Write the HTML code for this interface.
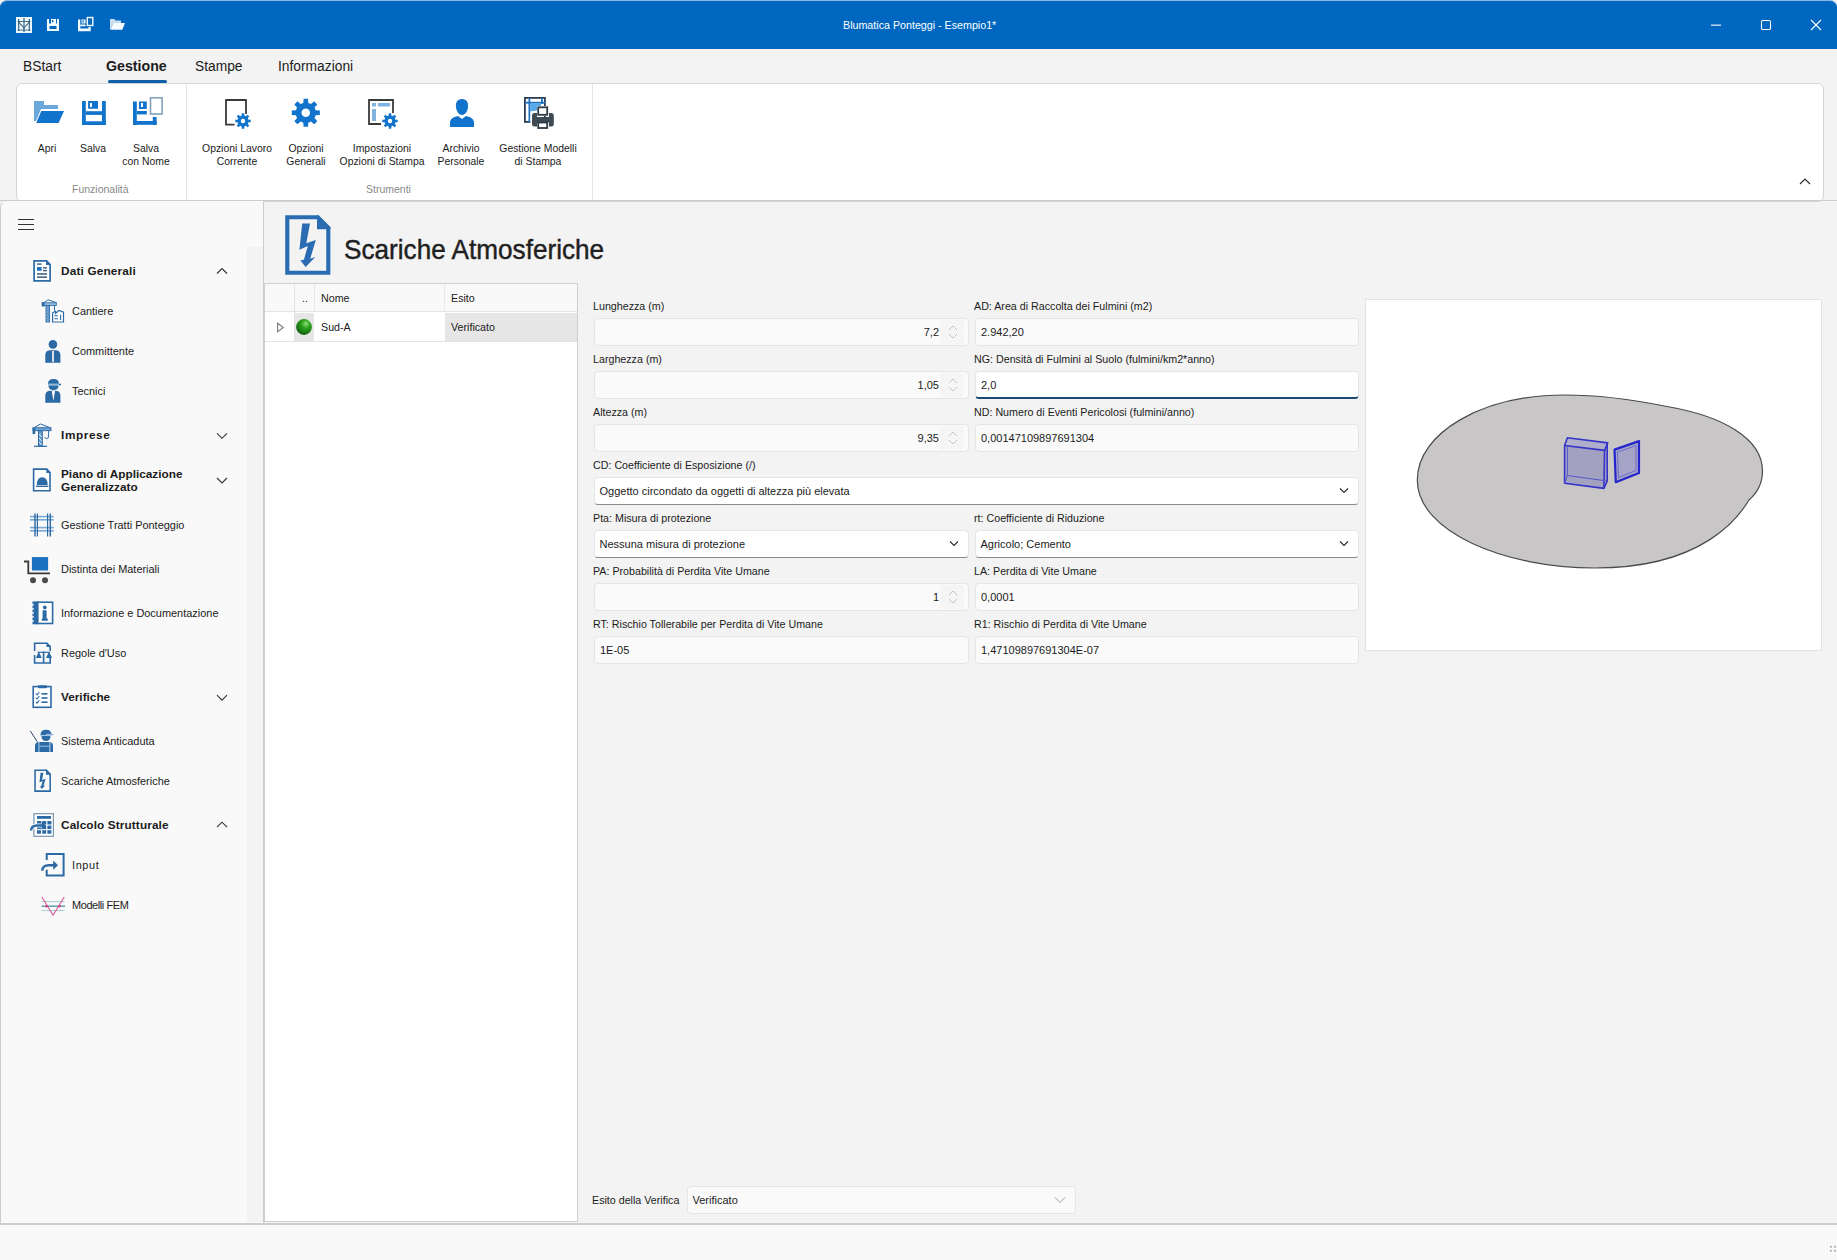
<!DOCTYPE html>
<html><head><meta charset="utf-8"><style>
*{margin:0;padding:0;box-sizing:border-box}
html,body{width:1837px;height:1260px;overflow:hidden;background:#f3f3f3;font-family:"Liberation Sans",sans-serif;color:#1b1b1b}
.a{position:absolute}
.t{position:absolute;white-space:nowrap;line-height:1}
#ov{position:absolute;left:0;top:0;width:1837px;height:1260px;overflow:visible}
#title{left:0;top:0;width:1837px;height:49px;background:#0067c0;border-top:1px solid #8fb6e3;border-top-left-radius:7px;border-top-right-radius:7px}
#ribbon{left:16px;top:83px;width:1808px;height:119px;background:#fff;border:1px solid #d4d4d4;border-radius:6px}
#hline{left:0;top:200px;width:1837px;height:1px;background:#cccccc}
#side{left:0;top:201px;width:264px;height:1023px;background:#f9f9f9;border-left:1px solid #cccccc;border-top-left-radius:6px}
#sidestrip{left:247px;top:247px;width:16px;height:975px;background:#f3f3f3}
#sideline{left:263px;top:201px;width:1px;height:1022px;background:#cccccc}
#status{left:0;top:1223px;width:1837px;height:37px;background:#f9f9f9;border-top:2px solid #cdcdcd}
.tab{font-size:13.8px;color:#1b1b1b;top:60px}
.rl{font-size:10.4px;color:#1b1b1b;text-align:center;line-height:13px;white-space:nowrap;position:absolute;margin-top:0.5px}
.gl{font-size:10.5px;color:#8a8a8a;position:absolute;white-space:nowrap;line-height:1}
.sh{font-size:11.8px;font-weight:bold;color:#1b1b1b}
.si{font-size:10.95px;color:#1b1b1b}
.lbl{font-size:10.7px;color:#1b1b1b}
.inp{position:absolute;height:28px;background:#fafafa;border:1px solid #e5e5e5;border-radius:4px}
.sel{position:absolute;height:28px;background:#fff;border:1px solid #e5e5e5;border-bottom:1px solid #8a8a8a;border-radius:4px}
.val{font-size:11px;color:#1b1b1b}
</style></head><body>
<div id="title" class="a"></div>
<div class="t" style="left:843px;top:20px;font-size:10.7px;color:#fff">Blumatica Ponteggi - Esempio1*</div>

<div class="t tab" style="left:23px">BStart</div>
<div class="t tab" style="left:106px;font-weight:bold;font-size:14.2px;top:58.6px">Gestione</div>
<div class="a" style="left:108px;top:79.6px;width:58.5px;height:3px;background:#0f5fa8;border-radius:2px"></div>
<div class="t tab" style="left:195px">Stampe</div>
<div class="t tab" style="left:278px">Informazioni</div>
<div id="ribbon" class="a"></div>
<div id="hline" class="a"></div>

<div class="a" style="left:186px;top:84px;width:1px;height:116px;background:#e6e6e6"></div>
<div class="a" style="left:592px;top:84px;width:1px;height:116px;background:#e6e6e6"></div>
<div class="rl" style="left:27px;top:141px;width:40px">Apri</div>
<div class="rl" style="left:73px;top:141px;width:40px">Salva</div>
<div class="rl" style="left:116px;top:141px;width:60px">Salva<br>con Nome</div>
<div class="gl" style="left:72px;top:184px">Funzionalità</div>
<div class="rl" style="left:196px;top:141px;width:82px">Opzioni Lavoro<br>Corrente</div>
<div class="rl" style="left:276px;top:141px;width:60px">Opzioni<br>Generali</div>
<div class="rl" style="left:332px;top:141px;width:100px">Impostazioni<br>Opzioni di Stampa</div>
<div class="rl" style="left:426px;top:141px;width:70px">Archivio<br>Personale</div>
<div class="rl" style="left:493px;top:141px;width:90px">Gestione Modelli<br>di Stampa</div>
<div class="gl" style="left:366px;top:184px">Strumenti</div>
<svg class="a" style="left:1798px;top:176px" width="14" height="10"><path d="M2,8 L7,3 L12,8" fill="none" stroke="#2b2b2b" stroke-width="1.1"/></svg>

<div id="side" class="a"></div>
<div id="sidestrip" class="a"></div>
<div id="sideline" class="a"></div>
<div class="t sh" style="left:61px;top:266px;letter-spacing:0.17px">Dati Generali</div>
<div class="t si" style="left:72px;top:306px">Cantiere</div>
<div class="t si" style="left:72px;top:346px">Committente</div>
<div class="t si" style="left:72px;top:386px">Tecnici</div>
<div class="t sh" style="left:61px;top:430px;letter-spacing:0.6px">Imprese</div>
<div class="t sh" style="left:61px;top:469px">Piano di Applicazione</div>
<div class="t sh" style="left:61px;top:481.8px">Generalizzato</div>
<div class="t si" style="left:61px;top:519.6px">Gestione Tratti Ponteggio</div>
<div class="t si" style="left:61px;top:564px">Distinta dei Materiali</div>
<div class="t si" style="left:61px;top:607.6px">Informazione e Documentazione</div>
<div class="t si" style="left:61px;top:648px">Regole d'Uso</div>
<div class="t sh" style="left:61px;top:692px">Verifiche</div>
<div class="t si" style="left:61px;top:736px">Sistema Anticaduta</div>
<div class="t si" style="left:61px;top:776px">Scariche Atmosferiche</div>
<div class="t sh" style="left:61px;top:819.5px;letter-spacing:0.11px">Calcolo Strutturale</div>
<div class="t si" style="left:72px;top:860px;letter-spacing:0.6px">Input</div>
<div class="t si" style="left:72px;top:899.6px;letter-spacing:-0.4px">Modelli FEM</div>

<div class="t" style="left:344px;top:235.6px;font-size:27.6px;color:#1f1f1f;transform:scaleX(0.9475);transform-origin:0 0;-webkit-text-stroke:0.45px #1f1f1f">Scariche Atmosferiche</div>
<div class="a" style="left:264px;top:283px;width:314px;height:939px;background:#fff;border:1px solid #cfcfcf"></div>
<div class="a" style="left:265px;top:284px;width:312px;height:28px;background:#f9f9f9;border-bottom:1px solid #e3e3e3"></div>
<div class="a" style="left:294px;top:284px;width:1px;height:58px;background:#e3e3e3"></div>
<div class="a" style="left:314px;top:284px;width:1px;height:28px;background:#e8e8e8"></div>
<div class="a" style="left:444px;top:284px;width:1px;height:28px;background:#e8e8e8"></div>
<div class="a" style="left:295px;top:313px;width:19px;height:28px;background:#e6e6e6"></div>
<div class="a" style="left:445px;top:313px;width:132px;height:28px;background:#e6e6e6"></div>
<div class="a" style="left:265px;top:341px;width:312px;height:1px;background:#e3e3e3"></div>
<div class="t lbl" style="left:302px;top:293px">..</div>
<div class="t lbl" style="left:321px;top:293px">Nome</div>
<div class="t lbl" style="left:451px;top:293px">Esito</div>
<div class="t lbl" style="left:321px;top:322px">Sud-A</div>
<div class="t lbl" style="left:451px;top:322px">Verificato</div>
<div class="t lbl" style="left:593px;top:301.2px">Lunghezza (m)</div><div class="inp" style="left:594px;top:318px;width:375px"></div><div class="a" style="left:940px;top:320px;width:24px;height:24px;background:#f5f5f5;border-radius:2px"></div><div class="t val" style="left:594px;width:345px;text-align:right;top:326.9px">7,2</div><div class="t lbl" style="left:974px;top:301.2px">AD: Area di Raccolta dei Fulmini (m2)</div><div class="inp" style="left:975px;top:318px;width:384px"></div><div class="t val" style="left:981px;top:326.9px">2.942,20</div><div class="t lbl" style="left:593px;top:354.2px">Larghezza (m)</div><div class="inp" style="left:594px;top:371px;width:375px"></div><div class="a" style="left:940px;top:373px;width:24px;height:24px;background:#f5f5f5;border-radius:2px"></div><div class="t val" style="left:594px;width:345px;text-align:right;top:379.9px">1,05</div><div class="t lbl" style="left:974px;top:354.2px">NG: Densità di Fulmini al Suolo (fulmini/km2*anno)</div><div class="inp" style="left:975px;top:371px;width:384px;background:#fff;border-bottom:2px solid #1d4a70"></div><div class="t val" style="left:981px;top:379.9px">2,0</div><div class="t lbl" style="left:593px;top:407.2px">Altezza (m)</div><div class="inp" style="left:594px;top:424px;width:375px"></div><div class="a" style="left:940px;top:426px;width:24px;height:24px;background:#f5f5f5;border-radius:2px"></div><div class="t val" style="left:594px;width:345px;text-align:right;top:432.9px">9,35</div><div class="t lbl" style="left:974px;top:407.2px">ND: Numero di Eventi Pericolosi (fulmini/anno)</div><div class="inp" style="left:975px;top:424px;width:384px"></div><div class="t val" style="left:981px;top:432.9px">0,00147109897691304</div><div class="t lbl" style="left:593px;top:460.2px">CD: Coefficiente di Esposizione (/)</div><div class="sel" style="left:594px;top:477px;width:765px"></div><div class="t val" style="left:599.5px;top:485.9px">Oggetto circondato da oggetti di altezza più elevata</div><div class="t lbl" style="left:593px;top:513.2px">Pta: Misura di protezione</div><div class="sel" style="left:594px;top:530px;width:375px"></div><div class="t val" style="left:599.5px;top:538.9px">Nessuna misura di protezione</div><div class="t lbl" style="left:974px;top:513.2px">rt: Coefficiente di Riduzione</div><div class="sel" style="left:975px;top:530px;width:384px"></div><div class="t val" style="left:980.5px;top:538.9px">Agricolo; Cemento</div><div class="t lbl" style="left:593px;top:566.2px">PA: Probabilità di Perdita Vite Umane</div><div class="inp" style="left:594px;top:583px;width:375px"></div><div class="a" style="left:940px;top:585px;width:24px;height:24px;background:#f5f5f5;border-radius:2px"></div><div class="t val" style="left:594px;width:345px;text-align:right;top:591.9px">1</div><div class="t lbl" style="left:974px;top:566.2px">LA: Perdita di Vite Umane</div><div class="inp" style="left:975px;top:583px;width:384px"></div><div class="t val" style="left:981px;top:591.9px">0,0001</div><div class="t lbl" style="left:593px;top:619.2px">RT: Rischio Tollerabile per Perdita di Vite Umane</div><div class="inp" style="left:594px;top:636px;width:375px"></div><div class="t val" style="left:600px;top:644.9px">1E-05</div><div class="t lbl" style="left:974px;top:619.2px">R1: Rischio di Perdita di Vite Umane</div><div class="inp" style="left:975px;top:636px;width:384px"></div><div class="t val" style="left:981px;top:644.9px">1,47109897691304E-07</div>
<div class="a" style="left:1365px;top:299px;width:457px;height:352px;background:#fff;border:1px solid #e3e3e3"></div>
<div class="t lbl" style="left:592px;top:1194.5px">Esito della Verifica</div>
<div class="inp" style="left:687px;top:1186px;width:389px;height:28px"></div>
<div class="t val" style="left:692.5px;top:1195.1px">Verificato</div>
<div id="status" class="a"></div><svg id="ov" width="1837" height="1260" viewBox="0 0 1837 1260">
<rect x="16.5" y="17.5" width="15" height="15" fill="#f4fbff" stroke="#e8f4ff" stroke-width="1"/>
<rect x="18" y="19" width="1.3" height="12" fill="#3f6e8e"/>
<rect x="28.7" y="19" width="1.3" height="12" fill="#3f6e8e"/>
<rect x="23.2" y="18" width="1.6" height="14" fill="#5b89a8"/>
<path d="M18.5,21.8 L24,28 L29.5,21.8" fill="none" stroke="#3a5f7c" stroke-width="1.1"/><rect x="17.5" y="21" width="13" height="0.9" fill="#3a5f7c"/><rect x="17.5" y="29.6" width="13" height="0.9" fill="#3a5f7c"/>
<rect x="47" y="19" width="12" height="12" fill="#f4fbff"/>
<rect x="49" y="19" width="2" height="4.5" fill="#0067c0"/><rect x="56" y="19" width="1" height="4.5" fill="#0067c0"/>
<rect x="52" y="20" width="1.3" height="2.3" fill="#0067c0"/>
<rect x="49.5" y="26" width="7" height="3" fill="#0067c0"/>
<path fill="#f4fbff" d="M78,19.5 H80.3 V28.5 H88.5 V27 H90.7 V31.2 H78Z"/>
<rect x="81.5" y="19.5" width="4" height="4" fill="#f4fbff"/><rect x="82.5" y="20.3" width="1.2" height="2.3" fill="#0067c0"/>
<rect x="80.3" y="24.5" width="5.2" height="1.8" fill="#f4fbff"/>
<rect x="87.3" y="17.5" width="5.5" height="8" fill="#0a66b8" stroke="#f4fbff" stroke-width="1.4"/>
<path d="M110,19 H114.5 L115.5,20.5 H121 V23 H113 L111,29.5 H110Z" fill="#c8ddf0"/>
<path d="M113,23 H125 L122.3,29.8 H110.8Z" fill="#f4fbff"/>
<rect x="1711" y="24.6" width="10" height="1.1" fill="#fff"/>
<rect x="1761.5" y="20.5" width="9" height="9" rx="1.3" fill="none" stroke="#fff" stroke-width="1.1"/>
<path d="M1811,20 L1821,30 M1821,20 L1811,30" stroke="#fff" stroke-width="1.1"/>

<path d="M34,101 H44 V105 H58 V109 H41 L36,121 H34Z" fill="#6aa8dc"/>
<path d="M41.3,111 H64 L58.6,123 H36.2Z" fill="#1173cc"/>
<rect x="82" y="101" width="3.8" height="24" fill="#1173cc"/>
<rect x="102" y="101" width="3.8" height="24" fill="#1173cc"/>
<rect x="82" y="121.3" width="23.8" height="3.7" fill="#1173cc"/>
<rect x="85.8" y="111.2" width="16.2" height="3.7" fill="#1173cc"/>
<path fill="#1173cc" fill-rule="evenodd" d="M88.1,101 H98 V108.7 H88.1Z M90,103 V107 H92 V103Z"/>
<rect x="133" y="101.5" width="3.8" height="23.3" fill="#1173cc"/>
<rect x="133" y="121" width="23.6" height="3.8" fill="#1173cc"/>
<rect x="152.8" y="117" width="3.8" height="7.8" fill="#1173cc"/>
<rect x="136.8" y="111" width="10" height="3.4" fill="#1173cc"/>
<path fill="#1173cc" fill-rule="evenodd" d="M139,101.5 H146.8 V109 H139Z M141,103 V107 H143 V103Z"/>
<rect x="150.5" y="97.8" width="11.6" height="16.2" fill="none" stroke="#8aa6bf" stroke-width="1.7"/>
<path d="M234.5,124.6 H226 V100 H246 V114" fill="none" stroke="#3a3a3a" stroke-width="1.8"/>
<path fill="#1173cc" fill-rule="evenodd" d="M241.64,115.57 L241.78,113.30 L244.22,113.30 L244.36,115.57 L245.88,116.20 L247.58,114.69 L249.31,116.42 L247.80,118.12 L248.43,119.64 L250.70,119.78 L250.70,122.22 L248.43,122.36 L247.80,123.88 L249.31,125.58 L247.58,127.31 L245.88,125.80 L244.36,126.43 L244.22,128.70 L241.78,128.70 L241.64,126.43 L240.12,125.80 L238.42,127.31 L236.69,125.58 L238.20,123.88 L237.57,122.36 L235.30,122.22 L235.30,119.78 L237.57,119.64 L238.20,118.12 L236.69,116.42 L238.42,114.69 L240.12,116.20Z M245.20,121.00 A2.2,2.2 0 1,0 240.80,121.00 A2.2,2.2 0 1,0 245.20,121.00Z"/>
<path fill="#1173cc" fill-rule="evenodd" d="M303.32,102.91 L303.58,98.77 L308.02,98.77 L308.28,102.91 L311.04,104.05 L314.15,101.31 L317.29,104.45 L314.55,107.56 L315.69,110.32 L319.83,110.58 L319.83,115.02 L315.69,115.28 L314.55,118.04 L317.29,121.15 L314.15,124.29 L311.04,121.55 L308.28,122.69 L308.02,126.83 L303.58,126.83 L303.32,122.69 L300.56,121.55 L297.45,124.29 L294.31,121.15 L297.05,118.04 L295.91,115.28 L291.77,115.02 L291.77,110.58 L295.91,110.32 L297.05,107.56 L294.31,104.45 L297.45,101.31 L300.56,104.05Z M310.10,112.80 A4.3,4.3 0 1,0 301.50,112.80 A4.3,4.3 0 1,0 310.10,112.80Z"/>
<path d="M381,124 H369 V100 H393 V113" fill="none" stroke="#3a3a3a" stroke-width="1.8"/>
<rect x="372" y="103" width="4" height="3.5" fill="#7fb2de"/>
<rect x="378" y="103" width="12" height="3.5" fill="#7fb2de"/>
<rect x="372" y="109" width="4" height="12" fill="#7fb2de"/>
<path fill="#1173cc" fill-rule="evenodd" d="M388.64,115.57 L388.78,113.30 L391.22,113.30 L391.36,115.57 L392.88,116.20 L394.58,114.69 L396.31,116.42 L394.80,118.12 L395.43,119.64 L397.70,119.78 L397.70,122.22 L395.43,122.36 L394.80,123.88 L396.31,125.58 L394.58,127.31 L392.88,125.80 L391.36,126.43 L391.22,128.70 L388.78,128.70 L388.64,126.43 L387.12,125.80 L385.42,127.31 L383.69,125.58 L385.20,123.88 L384.57,122.36 L382.30,122.22 L382.30,119.78 L384.57,119.64 L385.20,118.12 L383.69,116.42 L385.42,114.69 L387.12,116.20Z M392.20,121.00 A2.2,2.2 0 1,0 387.80,121.00 A2.2,2.2 0 1,0 392.20,121.00Z"/>
<path fill="#1173cc" d="M462,99 C467,99 468.5,103 468,107 C467.6,111 465.5,115 462,115 C458.5,115 456.4,111 456,107 C455.5,103 457,99 462,99Z"/>
<path fill="#1173cc" d="M458,116 L462,119 L466,116 C471,117 474,119 474,123 V127 H450 V123 C450,119 453,117 458,116Z"/>
<rect x="524.9" y="97.9" width="20" height="24" fill="none" stroke="#2c3e50" stroke-width="1.8"/>
<rect x="528.5" y="98" width="1.8" height="24" fill="#1a6fc0"/>
<rect x="525" y="101.8" width="20" height="1.8" fill="#1a6fc0"/>
<rect x="541" y="98" width="1.8" height="6" fill="#1a6fc0"/>
<path d="M530.3,103.6 H541 V106 H537 V110.5 L531,111.5 V116 H530.3Z" fill="#5aa7e8"/>
<rect x="537" y="106" width="12" height="10" fill="#fff"/>
<rect x="530.5" y="111.5" width="6.5" height="12" fill="#fff"/>
<path fill="#3d4a52" d="M534,113 H537 V117 H549 V113 H551.5 Q553.8,113 553.8,115.5 V124 Q553.8,126.5 551.5,126.5 H549 V122.5 H537 V126.5 H534.5 Q532,126.5 532,124 V115.5 Q532,113 534,113Z"/>
<rect x="538.2" y="107.3" width="9" height="7.5" fill="none" stroke="#2c3a44" stroke-width="1.8"/>
<rect x="538.2" y="122.5" width="9" height="5.5" fill="#fff" stroke="#2c3a44" stroke-width="1.8"/>

<g stroke="#333" stroke-width="1.2"><path d="M18,219.5 H34 M18,224.5 H34 M18,229.5 H34"/></g>
<g fill="none" stroke="#333" stroke-width="1.1">
<path d="M217,273.5 L222,268.5 L227,273.5"/>
<path d="M217,433.3 L222,438.3 L227,433.3"/>
<path d="M217,478 L222,483 L227,478"/>
<path d="M217,695.2 L222,700.2 L227,695.2"/>
<path d="M217,827.2 L222,822.2 L227,827.2"/>
</g>
<!-- dati generali -->
<path d="M34.1,260.8 H46.6 L50.1,264.5 V280.9 H34.1Z" fill="#fff" stroke="#2c6aa6" stroke-width="1.7"/>
<path d="M46,260 L51,265 H46Z" fill="#2c6aa6"/>
<rect x="37" y="263.4" width="4.6" height="1.4" fill="#3d5f7d"/>
<rect x="37" y="267" width="4.6" height="3.8" fill="#1f6fc0"/>
<rect x="43" y="267.2" width="4" height="1.4" fill="#3d5f7d"/>
<rect x="43" y="269.9" width="4" height="1.4" fill="#3d5f7d"/>
<rect x="37" y="273.2" width="10" height="1.5" fill="#3d5f7d"/>
<rect x="37" y="276.4" width="10" height="1.5" fill="#3d5f7d"/>
<!-- cantiere -->
<path d="M44,302.7 L48,299.8 L56.5,302.7" fill="none" stroke="#2c6aa6" stroke-width="1"/>
<rect x="42.3" y="302.8" width="14" height="2.6" fill="#9ec0e2" stroke="#2c6aa6" stroke-width="0.9"/>
<rect x="41.8" y="302.3" width="2.8" height="4.2" fill="#2c6aa6"/>
<rect x="46" y="305.5" width="3.6" height="16.5" fill="#9ec0e2" stroke="#2c6aa6" stroke-width="0.9"/>
<path d="M46.3,306 L49.3,309 L46.3,312 L49.3,315 L46.3,318 L49.3,321 M49.3,306 L46.3,309 L49.3,312 L46.3,315 L49.3,318 L46.3,321" stroke="#2c6aa6" stroke-width="0.7" fill="none"/>
<path d="M54.5,305.4 V310.5" stroke="#2c6aa6" stroke-width="1"/>
<path d="M52.6,322 V312.8 L55.5,311.2 V313.5 L59,310.5 L63.5,312.2 V322Z" fill="#fff" stroke="#2c6aa6" stroke-width="1.2"/>
<path d="M54.3,315.7 H58 M54.3,318.7 H58 M60.6,314.8 V320" stroke="#2c6aa6" stroke-width="1.1"/>
<!-- committente -->
<circle cx="52.9" cy="344.4" r="4.3" fill="#2c6aa6"/>
<path d="M45.3,362.7 V355 Q45.3,350.2 50.5,350.2 H55.2 Q60.4,350.2 60.4,355 V362.7Z" fill="#2c6aa6"/>
<rect x="52.2" y="351" width="1.6" height="11" fill="#fff"/>
<!-- tecnici -->
<path d="M48,383.8 Q48,379 53.5,379 Q59,379 59,383.8 H61 V385.2 H48Z" fill="#2c6aa6"/>
<rect x="48" y="383.6" width="11" height="1.3" fill="#9cc3e6"/>
<path d="M48.5,385.5 H58.5 Q58.5,390 53.5,390 Q48.5,390 48.5,385.5Z" fill="#2c6aa6"/>
<path d="M45.3,402.7 V395.5 Q45.3,390.7 50.5,390.7 H55.2 Q60.4,390.7 60.4,395.5 V402.7Z" fill="#2c6aa6"/>
<path d="M51.8,391 H55 L53.4,401Z" fill="#fff"/>
<!-- imprese -->
<path d="M34,427.7 L40.5,424 L50,427.7" fill="none" stroke="#2c6aa6" stroke-width="1"/>
<rect x="33" y="427.7" width="18" height="3" fill="#6f9fcf" stroke="#2c6aa6" stroke-width="0.9"/>
<rect x="32.6" y="428" width="2.6" height="6" fill="#2c6aa6"/>
<rect x="38.5" y="430.7" width="3.8" height="15.3" fill="#6f9fcf" stroke="#2c6aa6" stroke-width="1"/>
<path d="M39,434 L41.8,437 M39,438 L41.8,441 M39,442 L41.8,445" stroke="#fff" stroke-width="0.8"/>
<path d="M34,446.3 H47" stroke="#2c6aa6" stroke-width="1.2"/>
<path d="M48.6,430.7 V436 Q48.6,438.6 46.6,438.6 Q45,438.6 45,437" fill="none" stroke="#2c6aa6" stroke-width="1"/>
<!-- piano -->
<path d="M33.6,469.1 H46.8 L50,472.5 V490.8 H33.6Z" fill="#fff" stroke="#2c6aa6" stroke-width="1.6"/>
<path d="M46.3,468.3 L50.8,472.9 H46.3Z" fill="#2c6aa6"/>
<path d="M36.8,485 Q36.8,477.3 42.2,477.3 Q47.6,477.3 47.6,485Z" fill="#2c6aa6"/>
<rect x="36" y="485.6" width="12.4" height="1.4" fill="#2c6aa6"/>
<!-- gestione tratti -->
<g fill="#7aa8d6"><rect x="30" y="515.8" width="23.7" height="1.6"/><rect x="30" y="519" width="23.7" height="1.6"/><rect x="30" y="526.8" width="23.7" height="1.6"/><rect x="30" y="530" width="23.7" height="1.6"/></g>
<g fill="#2c6aa6"><rect x="34.3" y="513.5" width="1.4" height="23"/><rect x="36.8" y="513.5" width="1.2" height="23"/><rect x="47" y="513.5" width="1.2" height="23"/><rect x="49.6" y="513.5" width="1.4" height="23"/></g>
<!-- distinta -->
<rect x="31.9" y="557.1" width="16.2" height="13.4" fill="#1a6fc0"/>
<path d="M24,561.5 H28.3 V573.4 H50" fill="none" stroke="#3a3a3a" stroke-width="1.8"/>
<circle cx="33" cy="580.2" r="3" fill="#4a4a4a"/><circle cx="45" cy="580.2" r="3" fill="#4a4a4a"/>
<!-- informazione -->
<rect x="37.6" y="602.2" width="15" height="21.3" fill="#fff" stroke="#2c6aa6" stroke-width="1.6"/>
<rect x="32.5" y="601.4" width="5.8" height="22.9" fill="#2c6aa6"/>
<g fill="#fff"><rect x="31" y="604.3" width="3" height="1.2"/><rect x="31" y="608.3" width="3" height="1.2"/><rect x="31" y="612.3" width="3" height="1.2"/><rect x="31" y="616.3" width="3" height="1.2"/><rect x="31" y="620.3" width="3" height="1.2"/></g>
<circle cx="44.8" cy="607.4" r="1.9" fill="#2c6aa6"/>
<path d="M42.6,610.3 H46.6 V618.6 H47.8 V620.8 H41.8 V618.6 H42.6Z" fill="#2c6aa6"/>
<!-- regole -->
<path d="M34.6,643.2 H47 L50.2,646.6 V663 H34.6Z" fill="none" stroke="#2c6aa6" stroke-width="1.6"/>
<path d="M46.5,642.4 L51,647 H46.5Z" fill="#2c6aa6"/>
<rect x="30" y="651" width="25" height="4" fill="#f9f9f9"/>
<path d="M43.6,651.5 V663" stroke="#2c6aa6" stroke-width="1.6"/>
<path d="M37.5,652.3 H50" stroke="#2c6aa6" stroke-width="1.2"/>
<path d="M35.8,658 L38.8,651.8 L41.8,658Z M46,658 L49,651.8 L52,658Z" fill="#2c6aa6"/>
<!-- verifiche -->
<rect x="33.2" y="686.6" width="17.8" height="20.7" fill="#fff" stroke="#2c6aa6" stroke-width="1.6"/>
<rect x="38" y="685.2" width="9" height="3" rx="1" fill="#2c6aa6"/>
<path d="M35.8,693.5 L37,694.8 L39.4,692 M35.8,697.7 L37,699 L39.4,696.2 M35.8,701.9 L37,703.2 L39.4,700.4" fill="none" stroke="#2c6aa6" stroke-width="1.1"/>
<g fill="#2c6aa6"><rect x="41.5" y="693" width="6" height="1.6"/><rect x="41.5" y="697.2" width="6" height="1.6"/><rect x="41.5" y="701.4" width="6" height="1.6"/></g>
<!-- sistema anticaduta -->
<path d="M30.3,731 L37.3,741.8" stroke="#2a4a6a" stroke-width="1"/>
<path d="M40.5,735 Q40.5,729.8 46,729.8 Q51.5,729.8 51.5,735Z" fill="#2c6aa6"/>
<rect x="46" y="733.8" width="7.5" height="1.3" fill="#8fb3d6"/>
<rect x="40.5" y="734.9" width="11" height="1" fill="#9cc3e6"/>
<path d="M41.5,736 H50.5 Q50.5,741 46,741 Q41.5,741 41.5,736Z" fill="#2c6aa6"/>
<path d="M35,752 V746 Q35,742 39,742 H49 Q53,742 53,746 V752Z" fill="#2c6aa6"/>
<g fill="#9cc3e6"><rect x="38.3" y="742" width="1.2" height="10"/><rect x="49.3" y="742" width="1.2" height="10"/><rect x="39.5" y="745.7" width="9.8" height="1"/></g>
<!-- scariche small -->
<g transform="translate(34.3,769.5) scale(0.369,0.377)"><path d="M2,2 H32.5 L43,12.5 V57.4 H2Z" fill="none" stroke="#2c6aa6" stroke-width="4.2" stroke-linejoin="miter"/><path d="M31.7,0 H33 L45,12 V13.9 H31.7Z" fill="#2c6aa6"/><path d="M16.9,8.3 L24.7,8.3 L21.0,27.9 L30.5,24.7 L24.9,43.5 L30.0,41.7 L20.3,51.7 L15.0,45.0 L18.6,44.5 L22.5,30.8 L14.1,34.5Z" fill="#2c6aa6"/></g>
<!-- calcolo -->
<rect x="33.9" y="813.7" width="19.5" height="22.6" fill="#fff" stroke="#6f8fab" stroke-width="1.1"/>
<rect x="37" y="816" width="14" height="2.8" fill="#2c6aa6"/>
<g fill="#2c6aa6"><rect x="37" y="821" width="4" height="3.5"/><rect x="42.2" y="821" width="4" height="3.5"/><rect x="47.4" y="821" width="4" height="3.5"/><rect x="37" y="825.6" width="4" height="3.5"/><rect x="42.2" y="825.6" width="4" height="3.5"/><rect x="47.4" y="825.6" width="4" height="3.5"/><rect x="37" y="830.2" width="4" height="3.5"/><rect x="42.2" y="830.2" width="4" height="3.5"/><rect x="47.4" y="830.2" width="4" height="3.5"/></g>
<path d="M31,830.5 Q31.5,825.5 37,825.5 H42" fill="none" stroke="#fff" stroke-width="4"/>
<path d="M31,830.5 Q31.5,825.5 37,825.5 H42" fill="none" stroke="#2c6aa6" stroke-width="2.4"/>
<path d="M41.5,821.2 L46,825.5 L41.5,829.8Z" fill="#2c6aa6"/>
<!-- input -->
<path d="M46.7,860 V854 H63.6 V875.6 H46.7 V869.8" fill="none" stroke="#2c6aa6" stroke-width="2"/>
<path d="M42.2,870.8 Q42.5,865.2 49,865.2 H54" fill="none" stroke="#2c6aa6" stroke-width="2.4"/>
<path d="M53.2,860.6 L58,865.2 L53.2,869.8Z" fill="#2c6aa6"/>
<!-- modelli fem -->
<path d="M41.5,901.6 H64.5 M41.5,910.6 H64.5" stroke="#a9c9d0" stroke-width="1"/>
<path d="M41.5,906.2 H65" stroke="#6aa3b0" stroke-width="1.6"/>
<path d="M41.9,897 L53,915.2 L64.2,897" fill="none" stroke="#d8579a" stroke-width="1.1"/>
<circle cx="46.4" cy="906.2" r="1.3" fill="#d63f8a"/><circle cx="59.6" cy="906.2" r="1.3" fill="#d63f8a"/>

<defs><radialGradient id="gb" cx="0.62" cy="0.3" r="0.75"><stop offset="0" stop-color="#8fe07a"/><stop offset="0.35" stop-color="#2fa51f"/><stop offset="1" stop-color="#0d5a0a"/></radialGradient></defs>
<circle cx="304" cy="327" r="7.9" fill="url(#gb)"/>
<g transform="translate(285.3,215.3) scale(1,1)"><path d="M2,2 H32.5 L43,12.5 V57.4 H2Z" fill="none" stroke="#2a6cb2" stroke-width="4.1" stroke-linejoin="miter"/><path d="M31.7,0 H33 L45,12 V13.9 H31.7Z" fill="#2a6cb2"/><path d="M16.9,8.3 L24.7,8.3 L21.0,27.9 L30.5,24.7 L24.9,43.5 L30.0,41.7 L20.3,51.7 L15.0,45.0 L18.6,44.5 L22.5,30.8 L14.1,34.5Z" fill="#2a6cb2"/></g>
<path d="M1055,1197.5 L1060,1202.5 L1065,1197.5" fill="none" stroke="#c4c4c4" stroke-width="1.1"/>
<g fill="#9a9a9a"><rect x="1830" y="1246" width="1.6" height="1.6"/><rect x="1834" y="1246" width="1.6" height="1.6"/><rect x="1830" y="1250" width="1.6" height="1.6"/><rect x="1834" y="1250" width="1.6" height="1.6"/></g>
<path d="M277.6,323.3 L283.3,327.5 L277.6,331.7Z" fill="none" stroke="#7a7a7a" stroke-width="1.1"/>
<path d="M949,330 L953,326 L957,330 M949,334 L953,338 L957,334" fill="none" stroke="#c2c2c2" stroke-width="1"/><path d="M949,383 L953,379 L957,383 M949,387 L953,391 L957,387" fill="none" stroke="#c2c2c2" stroke-width="1"/><path d="M949,436 L953,432 L957,436 M949,440 L953,444 L957,440" fill="none" stroke="#c2c2c2" stroke-width="1"/><path d="M1340,488.5 L1344,492.5 L1348,488.5" fill="none" stroke="#2b2b2b" stroke-width="1.1"/><path d="M950,541.5 L954,545.5 L958,541.5" fill="none" stroke="#2b2b2b" stroke-width="1.1"/><path d="M1340,541.5 L1344,545.5 L1348,541.5" fill="none" stroke="#2b2b2b" stroke-width="1.1"/><path d="M949,595 L953,591 L957,595 M949,599 L953,603 L957,599" fill="none" stroke="#c2c2c2" stroke-width="1"/>
<path d="M1417.3,480 C1417.3,433 1482,395 1565,395 C1605,395 1640,401 1667,406.5 C1722,416 1762.5,438 1762.5,471 C1762.5,484 1757,493 1749,500 C1740,515 1705,568 1595,568 C1505,568 1417.3,532 1417.3,480Z" fill="#c8c6c6" stroke="#4a4a4a" stroke-width="1.2"/>
<path d="M1564.6,445.5 L1567.4,437.8 L1607.7,442.9 L1607.2,481.2 L1603.9,488.4 L1564.6,483.3Z" fill="#a3a1c0"/>
<path d="M1564.6,445.5 L1567.4,437.8 L1607.7,442.9 L1604.6,450.4Z" fill="#b0aecb"/>
<g fill="none" stroke="#3434c8" stroke-width="1.6" stroke-linejoin="round">
<path d="M1564.6,445.5 L1567.4,437.8 L1607.7,442.9 L1604.6,450.4 Z"/>
<path d="M1564.6,445.5 V483.3 L1603.9,488.4 L1607.2,481.2 V442.9"/>
<path d="M1604.6,450.4 L1603.9,488.4"/>
</g>
<path d="M1567.4,446 V475.5 L1564.6,483.3 M1567.4,475.5 L1607.2,481" fill="none" stroke="#5555cc" stroke-width="1"/>
<path d="M1614.5,449.6 L1639,441.1 V472.9 L1615.8,482.2Z" fill="#a6a4c6" stroke="#2424cc" stroke-width="2.2" stroke-linejoin="round"/>
<path d="M1617.5,452 L1636,445.5 V470.5 L1618.5,477.5Z" fill="none" stroke="#6a6ad0" stroke-width="1"/>
</svg></body></html>
